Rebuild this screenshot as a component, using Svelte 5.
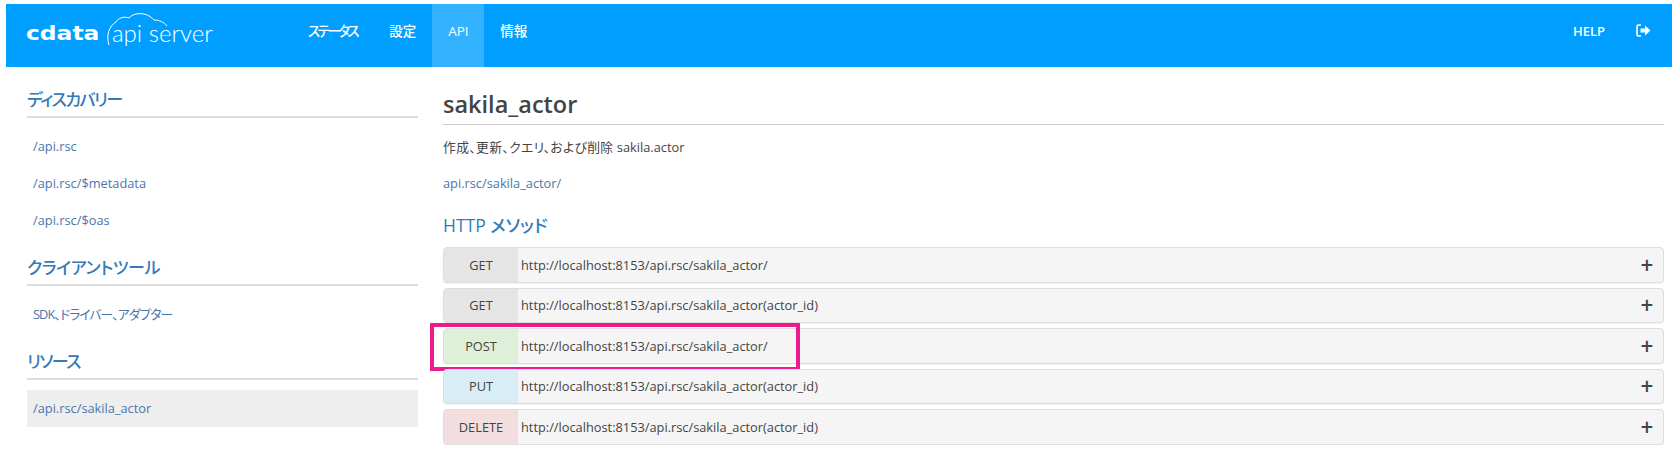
<script>
	const discovery = ['/api.rsc', '/api.rsc/$metadata', '/api.rsc/$oas'];
	const url = 'http://localhost:8153/api.rsc/';
	const methods = [
		{ verb: 'GET', kind: 'get', path: 'sakila_actor/' },
		{ verb: 'GET', kind: 'get', path: 'sakila_actor(actor_id)' },
		{ verb: 'POST', kind: 'post', path: 'sakila_actor/', marked: true },
		{ verb: 'PUT', kind: 'put', path: 'sakila_actor(actor_id)' },
		{ verb: 'DELETE', kind: 'delete', path: 'sakila_actor(actor_id)' },
	];
</script>

<div class="page">
	<header>
		<a class="logo" href="#top">
			<span class="cdata">cdata</span>
			<svg class="cloud" width="62" height="34" viewBox="0 0 62 34" fill="none" stroke="#fff" stroke-width="1">
				<path d="M3 32 C0 22 3 13 10 9 C12 5 18 3 23 5 C26 1 33 0 38 1 C43 2 46 5 48 7 C53 7 58 9 61 13" />
			</svg>
			<span class="product">api server</span>
		</a>
		<nav>
			<a href="#top" class="kana">ステータス</a>
			<a href="#top">設定</a>
			<a href="#top" class="active">API</a>
			<a href="#top">情報</a>
		</nav>
		<div class="right">
			<a href="#top">HELP</a>
			<svg class="logout" width="15" height="13" viewBox="0 0 15 13">
				<path d="M5 1H2.500A1.500 1.500 0 0 0 1 2.500v8A1.500 1.500 0 0 0 2.500 12H5" fill="none" stroke="#fff" stroke-width="1.6" />
				<path d="M4.500 4.500H9V1.500L14.500 6.500L9 11.500V8.500H4.500Z" fill="#fff" />
			</svg>
		</div>
	</header>

	<div class="content">
		<aside>
			<h3 class="top">ディスカバリー</h3>
			<ul>
				{#each discovery as item}
					<li><a href="#top">{item}</a></li>
				{/each}
			</ul>
			<h3 class="tools">クライアントツール</h3>
			<ul>
				<li><a class="kana-link" href="#top">SDK、ドライバー、アダプター</a></li>
			</ul>
			<h3>リソース</h3>
			<ul>
				<li class="selected"><a href="#top">/api.rsc/sakila_actor</a></li>
			</ul>
		</aside>

		<main>
			<h1>sakila_actor</h1>
			<p><span class="jp">作成、更新、クエリ、および削除</span> sakila.actor</p>
			<a class="endpoint" href="#top">api.rsc/sakila_actor/</a>
			<h2>HTTP メソッド</h2>
			<div class="methods">
				{#each methods as m}
					<div class="method">
						<span class="verb {m.kind}">{m.verb}</span>
						<span class="url">{url}{m.path}</span>
						<span class="plus">+</span>
						{#if m.marked}<span class="marker"></span>{/if}
					</div>
				{/each}
			</div>
		</main>
	</div>
</div>

<style>
	:global(body) {
		margin: 0;
		background: #fff;
	}

	.page {
		padding: 4px 0 0 6px;
		font-family: 'Open Sans', 'Noto Sans CJK JP', sans-serif;
		font-size: 12.8px;
		font-feature-settings: 'palt';
		color: #444;
	}

	a {
		text-decoration: none;
		color: #4a76ac;
	}

	header {
		display: flex;
		align-items: stretch;
		height: 63px;
		background: #009fff;
	}

	.logo {
		position: relative;
		display: flex;
		align-items: center;
		width: 286px;
		padding: 0 0 6px 20px;
		box-sizing: border-box;
		color: #fff;
	}

	.cdata {
		font-family: 'DejaVu Sans', sans-serif;
		font-weight: 700;
		font-size: 20px;
		line-height: 1;
		width: 86px;
		flex: none;
		display: inline-block;
		transform: scaleX(1.17);
		transform-origin: left;
	}

	.product {
		font-family: 'Lato', sans-serif;
		font-weight: 300;
		font-size: 24px;
		line-height: 1;
	}

	.cloud {
		position: absolute;
		left: 100px;
		top: 9px;
	}

	nav {
		display: flex;
	}

	nav a {
		color: #fff;
		padding: 0 16px;
		line-height: 55px;
		font-weight: 500;
		font-size: 13.5px;
	}

	nav a.kana {
		letter-spacing: -2.5px;
	}

	nav a.active {
		background: #33b2ff;
		width: 20px;
	}

	.right {
		margin-left: auto;
		display: flex;
		align-items: center;
		gap: 31px;
		padding: 0 21px 10px 0;
	}

	.right a {
		color: #fff;
		font-size: 13px;
		font-weight: 600;
	}

	.content {
		display: flex;
	}

	aside {
		width: 391px;
		margin-left: 21px;
		flex: none;
	}

	aside h3 {
		margin: 0;
		font-size: 17px;
		font-weight: 500;
		letter-spacing: -1.6px;
		line-height: 24px;
		padding: 15px 0 4px;
		color: #337ab7;
		border-bottom: 2px solid #ddd;
	}

	aside h3.top {
		margin-top: 6px;
	}

	aside h3.tools {
		letter-spacing: -0.4px;
	}

	aside ul {
		list-style: none;
		margin: 0;
		padding: 10px 0 2px;
	}

	aside li {
		height: 37px;
		line-height: 37px;
		padding-left: 6px;
	}

	aside li.selected {
		background: #eee;
	}

	.kana-link {
		letter-spacing: -0.9px;
	}

	main {
		flex: 1;
		margin-left: 25px;
		margin-right: 8px;
		min-width: 0;
	}

	h1 {
		margin: 21px 0 0;
		padding-bottom: 4px;
		font-size: 23.5px;
		font-weight: 600;
		line-height: 32px;
		color: #444;
		border-bottom: 1px solid #ccc;
	}

	p {
		margin: 13px 0 18px;
		line-height: 18px;
	}

	.jp {
		letter-spacing: 0.35px;
	}

	.endpoint {
		display: block;
		line-height: 18px;
	}

	h2 {
		margin: 21px 0 10px;
		font-size: 17.5px;
		font-weight: 500;
		line-height: 24px;
		color: #337ab7;
	}

	.methods {
		display: flex;
		flex-direction: column;
		gap: 5px;
	}

	.method {
		position: relative;
		display: flex;
		align-items: center;
		height: 33.5px;
		background: #f5f5f5;
		border: 1px solid #ddd;
		border-radius: 4px;
		box-shadow: 0 1px 1px rgba(0, 0, 0, 0.05);
	}

	.verb {
		width: 74px;
		align-self: stretch;
		flex: none;
		display: flex;
		align-items: center;
		justify-content: center;
		border-radius: 3px 0 0 3px;
		font-size: 12.8px;
	}

	.get {
		background: #e5e5e5;
	}

	.post {
		background: #dff0d8;
	}

	.put {
		background: #d9edf7;
	}

	.delete {
		background: #f2dede;
	}

	.url {
		margin-left: 3px;
		flex: 1;
	}

	.plus {
		font-family: 'DejaVu Sans', sans-serif;
		font-size: 17px;
		font-weight: 700;
		padding-right: 9px;
		color: #444;
	}

	/* pink annotation drawn on top of the POST row */
	.marker {
		position: absolute;
		left: -14px;
		top: -6px;
		width: 362px;
		height: 40px;
		border: 4px solid #ec1c8e;
		pointer-events: none;
	}
</style>
